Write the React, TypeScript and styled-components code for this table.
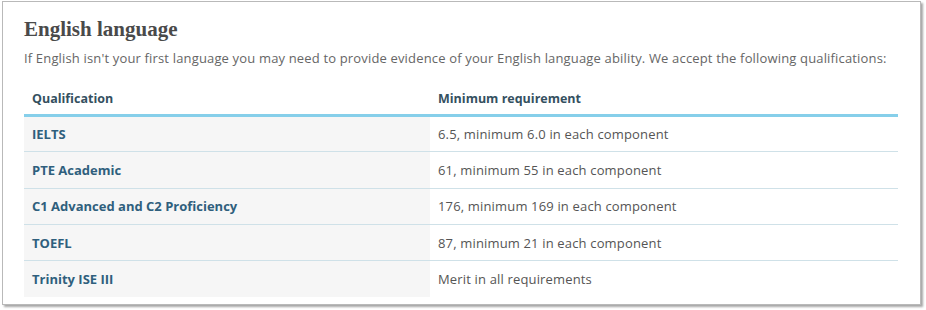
import React from "react";
import styled, { createGlobalStyle } from "styled-components";

const GlobalStyle = createGlobalStyle`
  html, body {
    margin: 0;
    padding: 0;
    background: #ffffff;
  }
  body {
    width: 926px;
    height: 310px;
    overflow: hidden;
  }
`;

const Frame = styled.div`
  box-sizing: border-box;
  width: 919px;
  height: 304px;
  margin: 1px 0 0 2px;
  padding: 14px 22px 0 21px;
  background: #fff;
  border: 1px solid #b9b9b9;
  box-shadow: 2px 2px 2px rgba(0, 0, 0, 0.35);
`;

const Title = styled.h2`
  margin: 0;
  font-family: "Liberation Serif", "DejaVu Serif", serif;
  font-weight: 700;
  font-size: 21px;
  line-height: 26px;
  color: #4a4a4a;
`;

const Intro = styled.p`
  margin: 7px 0 0;
  font-family: "Open Sans", Lato, sans-serif;
  font-size: 13px;
  letter-spacing: 0.16px;
  line-height: 18px;
  color: #666;
  white-space: nowrap;
`;

const Table = styled.table`
  width: 874px;
  margin-top: 16px;
  border-collapse: collapse;
  font-family: "Open Sans", Lato, sans-serif;
  font-size: 13px;
`;

const HeadCell = styled.th`
  height: 31px;
  padding: 0 8px;
  text-align: left;
  vertical-align: middle;
  font-size: 12.5px;
  font-weight: 700;
  color: #34505f;
  border-bottom: 3px solid #86cfea;
`;

const Row = styled.tr`
  height: 36.3px;
  & + & td {
    border-top: 1px solid #cfe1e8;
  }
`;

const NameCell = styled.td`
  width: 390px;
  padding: 0 8px;
  background: #f6f6f6;
  font-weight: 700;
  color: #2f5f7d;
`;

const ValueCell = styled.td`
  padding: 0 8px;
  letter-spacing: 0.16px;
  color: #555;
`;

const rows = [
  ["IELTS", "6.5, minimum 6.0 in each component"],
  ["PTE Academic", "61, minimum 55 in each component"],
  ["C1 Advanced and C2 Proficiency", "176, minimum 169 in each component"],
  ["TOEFL", "87, minimum 21 in each component"],
  ["Trinity ISE III", "Merit in all requirements"],
];

export default function App() {
  return (
    <>
      <GlobalStyle />
      <Frame>
        <Title>English language</Title>
        <Intro>
          If English isn't your first language you may need to provide evidence of your English
          language ability. We accept the following qualifications:
        </Intro>
        <Table>
          <thead>
            <tr>
              <HeadCell>Qualification</HeadCell>
              <HeadCell>Minimum requirement</HeadCell>
            </tr>
          </thead>
          <tbody>
            {rows.map(([name, value]) => (
              <Row key={name}>
                <NameCell>{name}</NameCell>
                <ValueCell>{value}</ValueCell>
              </Row>
            ))}
          </tbody>
        </Table>
      </Frame>
    </>
  );
}
